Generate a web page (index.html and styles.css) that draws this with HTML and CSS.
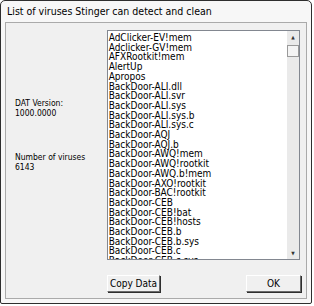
FILE: index.html
```html
<!DOCTYPE html>
<html lang="en">
<head>
    <meta charset="UTF-8">
    <title>List of viruses Stinger can detect and clean</title>
    <link rel="stylesheet" href="styles.css">
</head>
<body>
    <div class="window">
        <div class="titlebar">List of viruses Stinger can detect and clean</div>
        <div class="client">
            <div class="main">
                <div class="info">
                    <div class="field">
                        <div>DAT Version:</div>
                        <div>1000.0000</div>
                    </div>
                    <div class="field">
                        <div>Number of viruses</div>
                        <div>6143</div>
                    </div>
                </div>
                <div class="listbox">
                    <ul class="items">
                        <li>AdClicker-EV!mem</li>
                        <li>Adclicker-GV!mem</li>
                        <li>AFXRootkit!mem</li>
                        <li>AlertUp</li>
                        <li>Apropos</li>
                        <li>BackDoor-ALI.dll</li>
                        <li>BackDoor-ALI.svr</li>
                        <li>BackDoor-ALI.sys</li>
                        <li>BackDoor-ALI.sys.b</li>
                        <li>BackDoor-ALI.sys.c</li>
                        <li>BackDoor-AQJ</li>
                        <li>BackDoor-AQJ.b</li>
                        <li>BackDoor-AWQ!mem</li>
                        <li>BackDoor-AWQ!rootkit</li>
                        <li>BackDoor-AWQ.b!mem</li>
                        <li>BackDoor-AXO!rootkit</li>
                        <li>BackDoor-BAC!rootkit</li>
                        <li>BackDoor-CEB</li>
                        <li>BackDoor-CEB!bat</li>
                        <li>BackDoor-CEB!hosts</li>
                        <li>BackDoor-CEB.b</li>
                        <li>BackDoor-CEB.b.sys</li>
                        <li>BackDoor-CEB.c</li>
                        <li>BackDoor-CEB.c.sys</li>
                    </ul>
                    <div class="scrollbar">
                        <div class="arrow">&#9650;</div>
                        <div class="thumb"></div>
                        <div class="track"></div>
                        <div class="arrow">&#9660;</div>
                    </div>
                </div>
            </div>
            <div class="buttons">
                <button class="btn copy">Copy Data</button>
                <button class="btn ok">OK</button>
            </div>
        </div>
    </div>
</body>
</html>
```

FILE: styles.css
```css
body {
    margin: 0;
    background: #fff;
    font-family: "DejaVu Sans Condensed", "Liberation Sans", sans-serif;
    font-size: 10px;
    color: #000;
}
.window {
    box-sizing: border-box;
    width: 312px;
    height: 304px;
    border: 1px solid #2e2e2e;
    border-radius: 5px 5px 2px 2px;
    background: #f7f7f7;
    padding: 0 4px 4px 4px;
    display: flex;
    flex-direction: column;
}
.titlebar {
    height: 21px;
    line-height: 20px;
    padding-left: 2px;
    font-size: 10.5px;
}
.client {
    flex: 1;
    background: #f0f0f0;
    border: 1px solid #aaaaaa;
    padding: 7px 6px 0 9px;
}
.main {
    display: flex;
}
.info {
    width: 92px;
    padding-top: 68px;
    font-size: 8.5px;
}
.field {
    line-height: 10px;
    margin-bottom: 34px;
}
.listbox {
    box-sizing: border-box;
    width: 194px;
    height: 230px;
    border: 1px solid #828790;
    background: #fff;
    display: flex;
    overflow: hidden;
}
.items {
    flex: 1;
    list-style: none;
    margin: 0;
    padding: 2px 0 0 1px;
    line-height: 9.7px;
    white-space: nowrap;
    overflow: hidden;
}
.scrollbar {
    width: 12px;
    display: flex;
    flex-direction: column;
    background: #eaeaea;
}
.arrow {
    height: 12px;
    font-size: 5px;
    line-height: 12px;
    text-align: center;
    color: #333;
}
.thumb {
    box-sizing: border-box;
    height: 12px;
    margin-top: 2px;
    border: 1px solid #9a9a9a;
    background: #f4f4f4;
}
.track {
    flex: 1;
}
.buttons {
    margin: 15px 0 0 92px;
    width: 194px;
    display: flex;
    justify-content: space-between;
}
.btn {
    box-sizing: border-box;
    height: 17px;
    padding: 0;
    font-family: inherit;
    font-size: 10px;
    background: #f0f0f0;
    border: 1px solid #fff;
    border-right-color: #6a6a6a;
    border-bottom-color: #6a6a6a;
    box-shadow: 1px 1px 0 #2e2e2e;
}
.copy {
    width: 53px;
}
.ok {
    width: 55px;
}
```
